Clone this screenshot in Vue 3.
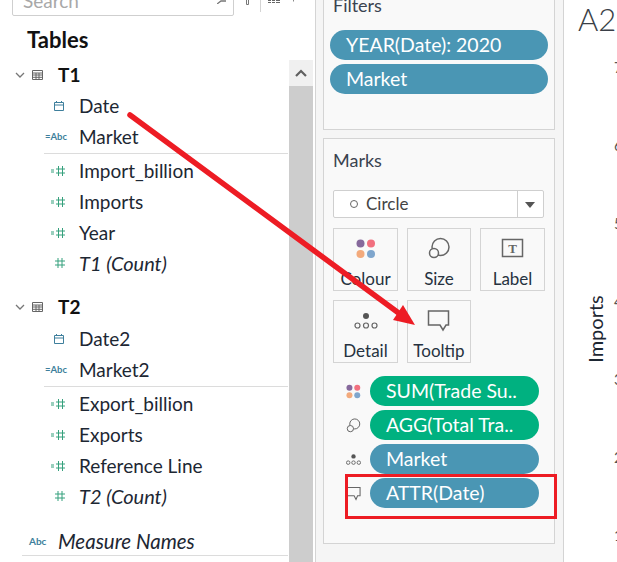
<script setup>
const sections = [
  {
    name: 'T1',
    dims: [
      { label: 'Date', type: 'date' },
      { label: 'Market', type: 'abc' }
    ],
    measures: [
      { label: 'Import_billion', type: 'num' },
      { label: 'Imports', type: 'num' },
      { label: 'Year', type: 'num' },
      { label: 'T1 (Count)', type: 'count', italic: true }
    ]
  },
  {
    name: 'T2',
    dims: [
      { label: 'Date2', type: 'date' },
      { label: 'Market2', type: 'abc' }
    ],
    measures: [
      { label: 'Export_billion', type: 'num' },
      { label: 'Exports', type: 'num' },
      { label: 'Reference Line', type: 'num' },
      { label: 'T2 (Count)', type: 'count', italic: true }
    ]
  }
]

const markCards = [
  { label: 'Colour', icon: 'colour' },
  { label: 'Size', icon: 'size' },
  { label: 'Label', icon: 'label' },
  { label: 'Detail', icon: 'detail' },
  { label: 'Tooltip', icon: 'tooltip' }
]

const markPills = [
  { label: 'SUM(Trade Su..', icon: 'colour', green: true },
  { label: 'AGG(Total Tra..', icon: 'size', green: true },
  { label: 'Market', icon: 'detail' },
  { label: 'ATTR(Date)', icon: 'tooltip' }
]

// axis numbers, only their left edge is in frame
const ticks = ['7', '6', '5', '4', '3', '2', '1']
</script>

<template>
  <div class="page">
    <aside class="data">
      <div class="search-row">
        <div class="search">
          <span>Search</span>
          <svg class="glass" width="9" height="4" viewBox="0 0 9 4"><path d="M0 4l4-3h5" fill="none" stroke="#777" stroke-width="1.300" /></svg>
        </div>
        <svg class="tools" width="70" height="16" viewBox="0 0 70 16">
          <path d="M12.500 0v4.500h2V0" fill="none" stroke="#777" />
          <path d="M26.500 0v12" stroke="#d4d4d4" />
          <path d="M34 .5h3M38 .5h3M42 .5h4M34 2.500h3M38 2.500h3M42 2.500h4" stroke="#666" />
          <path d="M59.500 0v1.500" stroke="#888" />
        </svg>
      </div>
      <h2 class="tables">Tables</h2>
      <div class="list-wrap">
        <div class="list">
          <section v-for="s in sections" :key="s.name" class="group">
            <div class="row head">
              <svg class="chev" width="10" height="6" viewBox="0 0 10 6"><path d="M1 1l4 4 4-4" fill="none" stroke="#777" stroke-width="1.300" /></svg>
              <svg class="tbl" width="11" height="10" viewBox="0 0 11 10"><path d="M.5.5h10v9H.5zM.5 3h10M.5 5h10M.5 7.300h10M4 3v6.500M7 3v6.500" fill="none" stroke="#666" /></svg>
              <strong>{{ s.name }}</strong>
            </div>
            <div v-for="f in s.dims" :key="f.label" class="row field">
              <span class="ficon">
                <svg v-if="f.type === 'date'" class="date-icon" width="10" height="10" viewBox="0 0 10 10"><path d="M.5 1.500h9v8h-9zM.5 4h9M2.500 0v2M7.500 0v2" fill="none" stroke="#3e7f9c" /></svg>
                <span v-else class="abc">=Abc</span>
              </span>
              <span>{{ f.label }}</span>
            </div>
            <div class="sep"></div>
            <div v-for="f in s.measures" :key="f.label" class="row field" :class="{ it: f.italic }">
              <span class="ficon">
                <svg v-if="f.type === 'num'" width="14" height="10" viewBox="0 0 14 10"><path d="M0 4h3M0 6h3M5 3h9M5 7h9M7.500 0v10M11.500 0v10" fill="none" stroke="#35a07c" /></svg>
                <svg v-else width="10" height="10" viewBox="0 0 10 10"><path d="M0 3h10M0 7h10M3 0v10M7 0v10" fill="none" stroke="#35a07c" /></svg>
              </span>
              <span>{{ f.label }}</span>
            </div>
          </section>
          <div class="row names">
            <span class="abc big">Abc</span>
            <span>Measure Names</span>
          </div>
          <div class="sep wide"></div>
        </div>
        <div class="scrollbar">
          <div class="scroll-btn">
            <svg width="12" height="8" viewBox="0 0 12 8"><path d="M1 7l5-5 5 5" fill="none" stroke="#606060" stroke-width="2.200" /></svg>
          </div>
        </div>
      </div>
    </aside>

    <div class="shelves">
      <section class="card filters">
        <h3>Filters</h3>
        <div class="pill">YEAR(Date): 2020</div>
        <div class="pill">Market</div>
      </section>
      <section class="card marks">
        <h3>Marks</h3>
        <div class="select">
          <span class="dot"></span>
          <span class="select-label">Circle</span>
          <span class="caret"></span>
        </div>
        <div class="mark-grid">
          <div v-for="c in markCards" :key="c.label" class="mark-card">
            <svg class="mark-icon" width="24" height="24" viewBox="0 0 24 24">
              <template v-if="c.icon === 'colour'">
                <circle cx="6.500" cy="6.500" r="4" fill="#86699c" /><circle cx="17" cy="6.500" r="4" fill="#f1707f" />
                <circle cx="6.500" cy="17" r="4" fill="#f3aa7c" /><circle cx="17" cy="17" r="4" fill="#7fa6cd" />
              </template>
              <template v-else-if="c.icon === 'size'">
                <circle cx="13.500" cy="10" r="8.500" fill="none" stroke="#666" stroke-width="1.500" />
                <circle cx="7" cy="16" r="4.500" fill="#f9f9f9" stroke="#666" stroke-width="1.500" />
              </template>
              <template v-else-if="c.icon === 'label'">
                <rect x="1.500" y="2.500" width="20" height="17" fill="none" stroke="#666" stroke-width="1.500" />
                <text x="11.500" y="15.500" text-anchor="middle" class="t-glyph">T</text>
              </template>
              <template v-else-if="c.icon === 'detail'">
                <circle cx="12" cy="7" r="3" fill="#555" />
                <circle cx="3.500" cy="16.500" r="2.500" fill="none" stroke="#666" stroke-width="1.200" />
                <circle cx="12" cy="16.500" r="2.500" fill="none" stroke="#666" stroke-width="1.200" />
                <circle cx="20.500" cy="16.500" r="2.500" fill="none" stroke="#666" stroke-width="1.200" />
              </template>
              <path v-else d="M1.500 2h20v14h-2.500l-3 5-3-5H1.500z" fill="none" stroke="#666" stroke-width="1.500" />
            </svg>
            <span>{{ c.label }}</span>
          </div>
        </div>
        <div class="mark-pills">
          <div v-for="p in markPills" :key="p.label" class="mark-row">
            <svg class="small-icon" width="15" height="15" viewBox="0 0 24 24">
              <template v-if="p.icon === 'colour'">
                <circle cx="5.500" cy="6" r="4.800" fill="#86699c" /><circle cx="18" cy="6" r="4.800" fill="#f1707f" />
                <circle cx="5.500" cy="18" r="4.800" fill="#f3aa7c" /><circle cx="18" cy="18" r="4.800" fill="#7fa6cd" />
              </template>
              <template v-else-if="p.icon === 'size'">
                <circle cx="14" cy="9.500" r="8" fill="none" stroke="#666" stroke-width="1.600" />
                <circle cx="7" cy="17" r="5" fill="#f9f9f9" stroke="#666" stroke-width="1.600" />
              </template>
              <template v-else-if="p.icon === 'detail'">
                <circle cx="12" cy="7" r="3.500" fill="#555" />
                <circle cx="3.500" cy="17" r="2.800" fill="none" stroke="#666" stroke-width="1.500" />
                <circle cx="12" cy="17" r="2.800" fill="none" stroke="#666" stroke-width="1.500" />
                <circle cx="20.500" cy="17" r="2.800" fill="none" stroke="#666" stroke-width="1.500" />
              </template>
              <path v-else d="M1.500 2.500h21v13h-4l-2.500 6-3-6H1.500z" fill="none" stroke="#666" stroke-width="1.700" />
            </svg>
            <div class="pill" :class="{ green: p.green }">{{ p.label }}</div>
          </div>
        </div>
      </section>
    </div>

    <main class="view">
      <div class="sheet-title">A2</div>
      <div class="axis-label">Imports</div>
      <span v-for="(t, i) in ticks" :key="t" class="tick" :style="{ top: 58 + i * 78 + 'px' }">{{ t }}</span>
    </main>

    <!-- annotations pasted over the screenshot -->
    <svg class="arrow" width="617" height="562" viewBox="0 0 617 562">
      <path d="M130 115L400 314" stroke="#ed1c24" stroke-width="5.500" stroke-linecap="round" fill="none" />
      <path d="M415 325L393 320 403 305z" fill="#ed1c24" />
    </svg>
    <div class="red-box"></div>
  </div>
</template>

<style scoped>
.page {
  position: relative;
  display: flex;
  width: 617px;
  height: 562px;
  overflow: hidden;
  background: #fff;
  font-family: Lato, sans-serif;
  font-size: 19px;
  color: #1d2733;
}

.data {
  flex: none;
  width: 316px;
  box-sizing: border-box;
  border-right: 1px solid #d4d4d4;
}

.search-row {
  display: flex;
  height: 16px;
  padding-left: 12px;
}

.search {
  display: flex;
  justify-content: space-between;
  width: 222px;
  height: 28px;
  margin-top: -12px;
  box-sizing: border-box;
  border: 1px solid #cfcfcf;
  border-radius: 2px;
  padding: 0 7px 0 10px;
  color: #a8a8a8;
  font-size: 19px;
  line-height: 24px;
}

.glass {
  margin-top: 11px;
}

.tools {
  flex: none;
}

.tables {
  margin: 0;
  height: 44px;
  padding-left: 27px;
  font-size: 22px;
  font-weight: 700;
  line-height: 48px;
  color: #111;
}

.list-wrap {
  display: flex;
  height: 502px;
}

.list {
  flex: none;
  width: 288px;
}

.group {
  margin-bottom: 12px;
}

.group + .group {
  margin-bottom: 11px;
}

.row {
  display: flex;
  align-items: center;
  height: 31px;
  box-sizing: border-box;
  padding-bottom: 2px;
}

.head {
  font-size: 19px;
  color: #111;
}

.group + .group .head {
  height: 32px;
  padding-bottom: 3px;
}

.chev {
  margin-left: 15px;
}

.tbl {
  margin-left: 7px;
  margin-right: 15px;
}

.ficon {
  display: flex;
  justify-content: flex-end;
  align-items: center;
  flex: none;
  width: 68px;
  margin-right: 11px;
  padding-right: 3px;
  box-sizing: border-box;
}

.date-icon {
  margin-right: 1px;
}

.abc {
  margin-right: -2px;
  color: #3e7f9c;
  font-size: 9.500px;
  font-style: normal;
  font-weight: 700;
}

.abc.big {
  width: 58px;
  margin-right: 0;
  padding-left: 29px;
  box-sizing: border-box;
  font-size: 10px;
}

.sep {
  height: 1px;
  margin: 0 0 2px 44px;
  background: #dcdcdc;
}

.sep.wide {
  margin-left: 22px;
}

.it {
  padding-bottom: 3px;
  font-size: 20px;
  font-style: italic;
}

.names {
  padding-top: 2px;
  padding-bottom: 0;
  font-size: 20.500px;
  font-style: italic;
}

.scrollbar {
  flex: none;
  width: 24px;
  margin-left: 1px;
  background: #cdcdcd;
}

.scroll-btn {
  display: flex;
  align-items: center;
  justify-content: center;
  height: 26px;
  background: #f0f0f0;
}

.shelves {
  flex: none;
  width: 248px;
  box-sizing: border-box;
  padding-right: 8px;
  padding-left: 7px;
  background: #f5f5f5;
  border-right: 1px solid #d4d4d4;
}

.card {
  box-sizing: border-box;
  border: 1px solid #d4d4d4;
  background: #f9f9f9;
}

.card h3 {
  margin: 0;
  font-size: 18px;
  font-weight: 400;
  color: #3a4350;
}

.filters {
  height: 131px;
  margin-top: -1px;
  padding: 0 6px;
}

.filters h3 {
  height: 30px;
  padding-left: 3px;
  line-height: 11px;
}

.filters .pill {
  margin-bottom: 4px;
  padding-left: 16px;
}

.marks {
  height: 406px;
  margin-top: 8px;
  padding: 0 9px;
}

.marks h3 {
  height: 51px;
  line-height: 43px;
}

.pill {
  height: 30px;
  border-radius: 15px;
  background: #4a96b4;
  color: #fff;
  font-size: 19.500px;
  line-height: 29px;
  white-space: nowrap;
}

.pill.green {
  background: #00b180;
}

.select {
  display: flex;
  align-items: center;
  width: 211px;
  height: 28px;
  box-sizing: border-box;
  border: 1px solid #cfcfcf;
  border-radius: 2px;
  background: #fff;
  font-size: 17px;
  color: #444;
}

.dot {
  width: 6px;
  height: 6px;
  margin: 0 8px 0 16px;
  border: 1px solid #666;
  border-radius: 50%;
}

.select-label {
  flex: 1;
  padding-bottom: 2px;
}

.caret {
  position: relative;
  width: 25px;
  height: 100%;
  border-left: 1px solid #cfcfcf;
}

.caret::after {
  content: "";
  position: absolute;
  top: 11px;
  left: 7px;
  border: 5px solid transparent;
  border-top: 6px solid #555;
  border-bottom: 0;
}

.mark-grid {
  display: grid;
  grid-template-columns: 65px 64px 65px;
  gap: 9px;
  margin-top: 10px;
}

.mark-card {
  display: flex;
  flex-direction: column;
  align-items: center;
  height: 63px;
  box-sizing: border-box;
  border: 1px solid #d4d4d4;
  font-size: 17px;
  color: #263240;
}

.mark-icon {
  margin-top: 8px;
  height: 24px;
}

.mark-card span {
  line-height: 22px;
  margin-top: 7px;
}

.t-glyph {
  font-family: "Liberation Serif", serif;
  font-size: 13px;
  font-weight: 700;
  fill: #666;
}

.mark-pills {
  margin-top: 13px;
}

.mark-row {
  display: flex;
  align-items: center;
  gap: 9px;
  margin-bottom: 4px;
  padding-left: 13px;
}

.mark-row .pill {
  width: 169px;
  padding-left: 16px;
  box-sizing: border-box;
}

.small-icon {
  flex: none;
}

.view {
  flex: 1;
  position: relative;
  min-width: 0;
}

.sheet-title {
  margin: 0 0 0 14px;
  font-size: 31px;
  font-weight: 300;
  color: #3a3f47;
}

.axis-label {
  position: absolute;
  left: 31px;
  top: 329px;
  transform: translate(-50%, -50%) rotate(-90deg);
  font-size: 20px;
  white-space: nowrap;
}

.tick {
  position: absolute;
  left: 50px;
  font-size: 15px;
  line-height: 18px;
  color: #555;
}

.arrow {
  position: absolute;
  left: 0;
  top: 0;
  pointer-events: none;
}

.red-box {
  position: absolute;
  left: 345px;
  top: 474px;
  width: 212px;
  height: 45px;
  box-sizing: border-box;
  border: 3px solid #ed1c24;
}
</style>

<style>
html, body {
  margin: 0;
}
</style>
